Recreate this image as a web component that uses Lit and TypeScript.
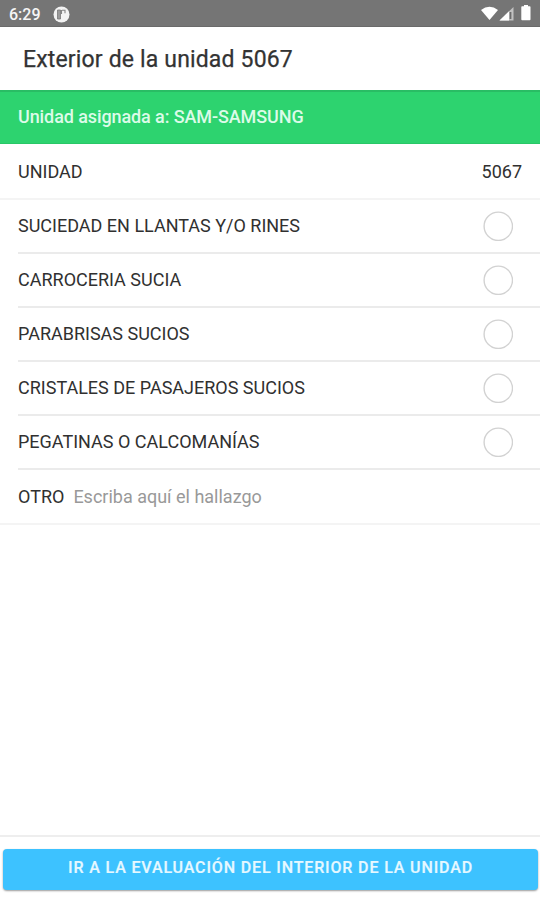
import { LitElement, html, css } from "lit";
import { customElement, state } from "lit/decorators.js";

@customElement("app-root")
export class AppRoot extends LitElement {
  @state() private checked: string[] = [];

  private items = [
    "SUCIEDAD EN LLANTAS Y/O RINES",
    "CARROCERIA SUCIA",
    "PARABRISAS SUCIOS",
    "CRISTALES DE PASAJEROS SUCIOS",
    "PEGATINAS O CALCOMANÍAS",
  ];

  static styles = css`
    * { box-sizing: border-box; }
    :host {
      display: flex;
      flex-direction: column;
      height: 900px;
      background: #fff;
      color: #303030;
      font-family: Roboto, "Liberation Sans", sans-serif;
      font-size: 18px;
      overflow: hidden;
    }
    .status {
      height: 27px;
      flex: none;
      background: #757575;
      border-bottom: 1px solid #6a6a6a;
      color: #f6f6f6;
      display: flex;
      align-items: center;
      padding: 2px 8px 0 9px;
      font-size: 16px;
      font-weight: 500;
    }
    .time { width: 44px; }
    .status svg { display: block; }
    .app { margin-right: auto; }
    .title {
      height: 63px;
      flex: none;
      display: flex;
      align-items: center;
      padding: 1px 23px 0;
      font-size: 23px;
      font-weight: 400;
      letter-spacing: 0.16px;
      -webkit-text-stroke: 0.25px #333;
      margin: 0;
      color: #333;
    }
    .banner {
      height: 54px;
      flex: none;
      background: #2dd36f;
      border-top: 2px solid #29bd64;
      border-bottom: 1px solid #29c767;
      color: #dcfbe8;
      display: flex;
      align-items: center;
      padding: 0 18px 2px;
      font-weight: 500;
      letter-spacing: -0.1px;
    }
    .row {
      height: 54px;
      flex: none;
      display: flex;
      align-items: center;
      justify-content: space-between;
      padding-right: 18px;
      margin-left: 18px;
      border-bottom: 2px solid #ebebeb;
    }
    .row.full {
      margin-left: 0;
      padding-left: 18px;
      border-bottom-color: #f4f4f4;
    }
    .row.unit { height: 56px; padding-top: 1px; }
    .row.other { height: 55px; justify-content: flex-start; gap: 9px; }
    .name { padding-bottom: 2px; }
    .circle {
      width: 30px;
      height: 30px;
      margin-right: 9px;
      border: 0;
      background: none;
      padding: 0;
    }
    .circle svg { display: block; }
    .ring { fill: none; stroke: #d2d2d2; stroke-width: 1.4; }
    .on .ring { fill: #3dc2ff; }
    .note {
      flex: 1;
      border: 0;
      outline: 0;
      padding: 0;
      font: inherit;
      color: inherit;
      background: none;
    }
    .note::placeholder { color: #999; opacity: 1; }
    .footer {
      margin-top: auto;
      height: 65px;
      flex: none;
      border-top: 2px solid #eee;
      padding: 12px 2px 0 3px;
    }
    .go {
      display: block;
      width: 100%;
      height: 41px;
      border: 0;
      border-radius: 4px;
      background: #3dc2ff;
      color: #e6f8ff;
      font: 500 16px Roboto, "Liberation Sans", sans-serif;
      letter-spacing: 0.86px;
      padding: 0 0 4px;
      -webkit-text-stroke: 0.2px #e6f8ff;
      box-shadow: 0 1px 2px rgba(0, 0, 0, 0.4);
    }
  `;

  private toggle(name: string) {
    this.checked = this.checked.includes(name)
      ? this.checked.filter((n) => n !== name)
      : [...this.checked, name];
  }

  render() {
    return html`
      <div class="status">
        <span class="time">6:29</span>
        <svg class="app" width="17" height="17" viewBox="0 0 17 17">
          <circle cx="8.5" cy="8.5" r="8" fill="#f3f3f3" />
          <path d="M4.500 4h3v9h-3z" fill="#9b9b9b" stroke="#777" stroke-width=".8" />
          <path d="M8.500 4v4M9 4.300h3v3" fill="none" stroke="#858585" stroke-width="1.100" />
        </svg>
        <svg width="52" height="18" viewBox="0 0 52 18">
          <path d="M1 5Q9.500 -1.500 18 5L9.500 15Z" fill="#fff" />
          <path d="M19.500 15.500L33.500 2V15.500Z" fill="#c2c2c2" />
          <path d="M19.500 15.500L29 6.300V15.500Z" fill="#fff" />
          <path d="M30.500 7v7" stroke="#6c6c6c" stroke-width="1.800" />
          <path d="M44 0h4v1.300h1.700q.8 0 .8.800v12.200q0 1-.8 1h-7.600q-.8 0-.8-1V2.100q0-.8.800-.8H44z" fill="#fff" />
        </svg>
      </div>
      <h1 class="title">Exterior de la unidad 5067</h1>
      <div class="banner">Unidad asignada a: SAM-SAMSUNG</div>
      <div class="row full unit"><span>UNIDAD</span><span>5067</span></div>
      ${this.items.map(
        (name) => html`<div class="row">
          <span class="name">${name}</span>
          <button
            class="circle ${this.checked.includes(name) ? "on" : ""}"
            aria-label=${name}
            @click=${() => this.toggle(name)}
          >
            <svg width="30" height="30" viewBox="0 0 30 30">
              <circle class="ring" cx="15.3" cy="15.3" r="14.2" />
            </svg>
          </button>
        </div>`
      )}
      <label class="row full other">
        <span>OTRO</span>
        <input class="note" placeholder="Escriba aquí el hallazgo" />
      </label>
      <div class="footer">
        <button class="go">IR A LA EVALUACIÓN DEL INTERIOR DE LA UNIDAD</button>
      </div>
    `;
  }
}
